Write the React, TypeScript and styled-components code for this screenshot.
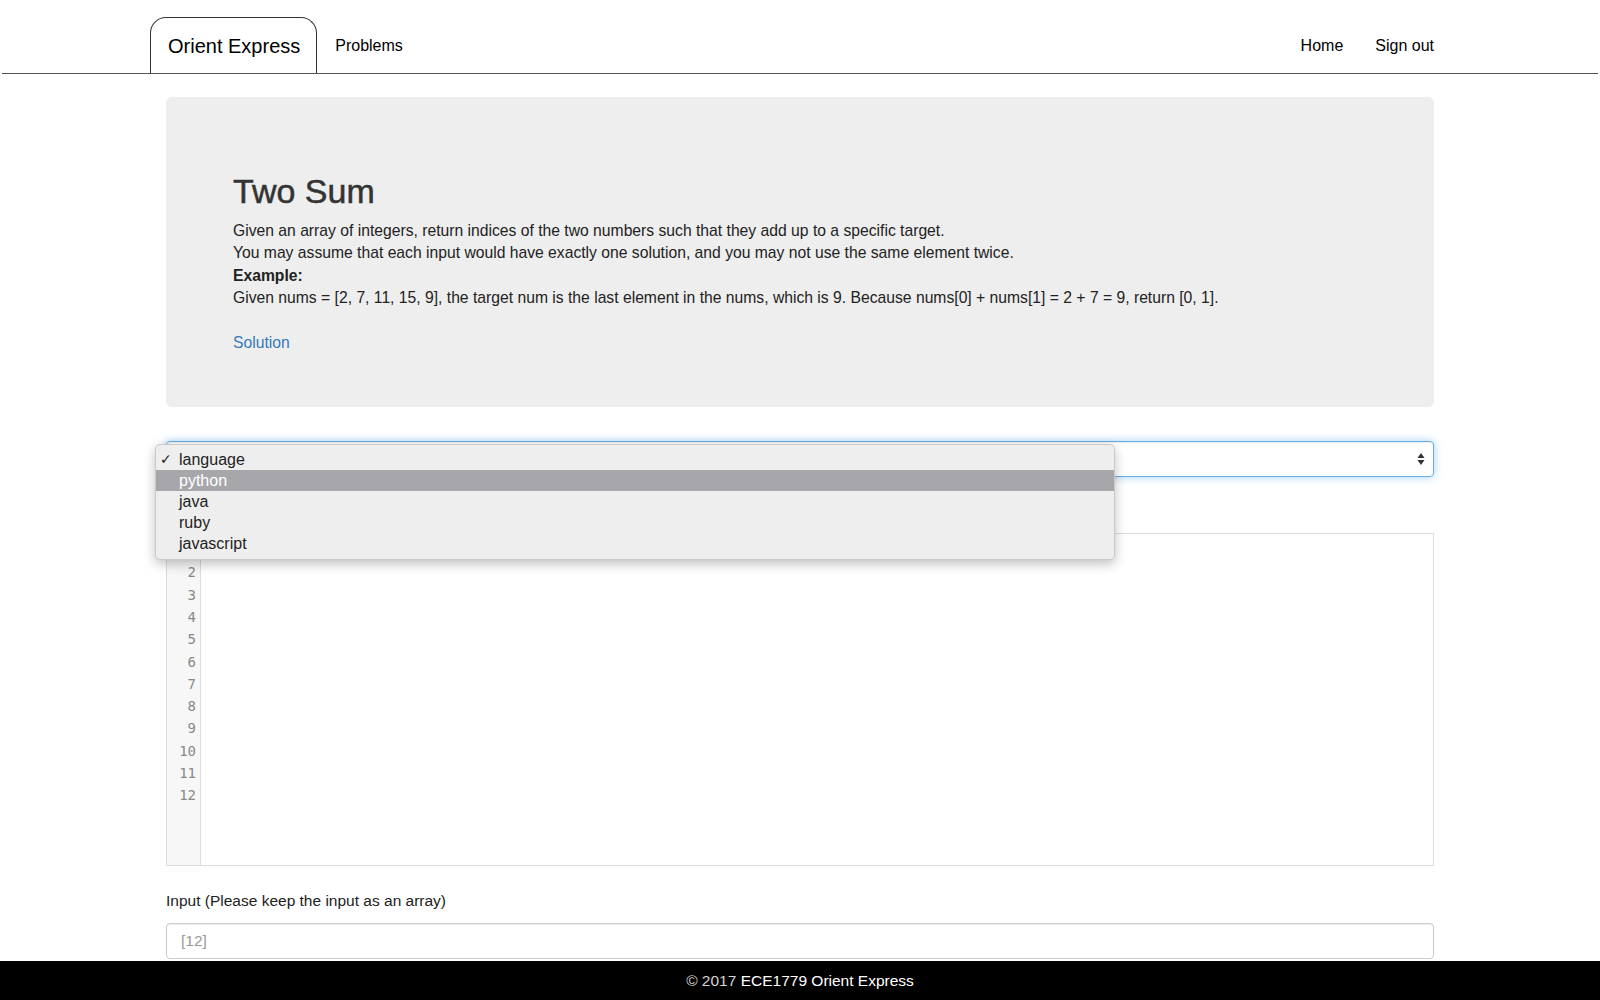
import React from "react";
import styled, { createGlobalStyle } from "styled-components";

const Global = createGlobalStyle`
  html, body { margin: 0; padding: 0; background: #fff; }
  body { font-family: "Liberation Sans", Arial, Helvetica, sans-serif; color: #333; }
  * { box-sizing: border-box; }
`;

const Header = styled.header`
  margin: 0 2px;
  height: 74px;
  border-bottom: 1px solid #555;
  display: flex;
  align-items: flex-end;
  padding: 0 164px 0 148px;
`;

const BrandTab = styled.a`
  height: 56px;
  display: flex;
  align-items: center;
  padding: 2px 16px 0 17px;
  border: 1px solid #333;
  border-bottom: none;
  border-radius: 16px 16px 0 0;
  font-size: 20px;
  color: #000;
  text-decoration: none;
`;

const NavLink = styled.a<{ $gap?: number }>`
  height: 56px;
  display: flex;
  align-items: center;
  padding-top: 2px;
  margin-left: ${(p) => p.$gap ?? 0}px;
  font-size: 16px;
  color: #000;
  text-decoration: none;
`;

const Spacer = styled.div`
  flex: 1;
`;

const Main = styled.main`
  width: 1268px;
  margin: 23px auto 0;
  padding-bottom: 60px;
`;

const Jumbotron = styled.section`
  background: #eee;
  border-radius: 6px;
  padding: 73px 66px 53px 67px;
`;

const Title = styled.h1`
  margin: 0 0 8px;
  font-size: 34px;
  line-height: 42px;
  font-weight: 500;
  color: #333;
  -webkit-text-stroke: 0.5px #333;
`;

const Para = styled.p<{ $bold?: boolean }>`
  margin: 0;
  font-size: 15.7px;
  line-height: 22.4px;
  color: #222;
  font-weight: ${(p) => (p.$bold ? 700 : 400)};
`;

const SolutionLink = styled.a`
  display: block;
  margin-top: 22px;
  font-size: 15.7px;
  line-height: 22.4px;
  color: #337ab7;
  text-decoration: none;
`;

const SelectWrap = styled.div`
  position: relative;
  margin-top: 34px;
`;

const SelectBox = styled.div`
  height: 36px;
  border: 1px solid #66afe9;
  border-radius: 4px;
  box-shadow: inset 0 1px 1px rgba(0, 0, 0, 0.075), 0 0 8px rgba(102, 175, 233, 0.6);
  display: flex;
  align-items: center;
  justify-content: space-between;
  padding: 0 8px 0 12px;
  font-size: 15.5px;
  color: #555;
  background: #fff;
`;

const Menu = styled.ul`
  position: absolute;
  left: -11px;
  top: 3px;
  width: 960px;
  margin: 0;
  padding: 4px 0 5px;
  list-style: none;
  background: #eeeeee;
  border: 1px solid #c9c9c9;
  border-radius: 5px;
  box-shadow: 0 4px 12px rgba(0, 0, 0, 0.25);
  z-index: 5;
`;

const MenuItem = styled.li<{ $active?: boolean }>`
  position: relative;
  height: 21px;
  line-height: 21px;
  padding-left: 23px;
  font-size: 16px;
  color: ${(p) => (p.$active ? "#fff" : "#222")};
  background: ${(p) => (p.$active ? "#a7a7ab" : "transparent")};
`;

const Check = styled.span`
  position: absolute;
  left: 4px;
  top: 0;
  font-size: 14px;
  font-family: "DejaVu Sans", sans-serif;
`;

const Editor = styled.div`
  margin-top: 56px;
  height: 333px;
  border: 1px solid #ddd;
  display: flex;
`;

const Gutter = styled.div`
  width: 34px;
  background: #f7f7f7;
  border-right: 1px solid #ddd;
  padding: 5px 4px 0 0;
  text-align: right;
  font-family: "DejaVu Sans Mono", "Liberation Mono", monospace;
  font-size: 14px;
  line-height: 22.3px;
  color: #888;
`;

const CodeArea = styled.div`
  flex: 1;
  background: #fff;
`;

const Label = styled.div`
  margin-top: 25px;
  font-size: 15.5px;
  line-height: 20px;
  color: #222;
`;

const InputBox = styled.input`
  display: block;
  width: 100%;
  margin-top: 12px;
  height: 36px;
  border: 1px solid #ccc;
  border-radius: 4px;
  padding: 0 14px;
  font-family: inherit;
  font-size: 15.5px;
  box-shadow: inset 0 1px 1px rgba(0, 0, 0, 0.075);
  &::placeholder { color: #999; }
`;

const Footer = styled.footer`
  position: fixed;
  left: 0;
  right: 0;
  bottom: 0;
  height: 39px;
  background: #000;
  color: #fff;
  text-align: center;
  line-height: 39px;
  font-size: 15.5px;
`;

const Muted = styled.span`
  color: #d4d4d4;
`;

const Arrows = () => (
  <svg width="8" height="14" viewBox="0 0 8 14">
    <path d="M4 1 L7.5 6 H0.5 Z" fill="#333" />
    <path d="M4 13 L7.5 8 H0.5 Z" fill="#333" />
  </svg>
);

const languages = ["language", "python", "java", "ruby", "javascript"];

export default function App() {
  return (
    <>
      <Global />
      <Header>
        <BrandTab href="#">Orient Express</BrandTab>
        <NavLink href="#" $gap={18}>Problems</NavLink>
        <Spacer />
        <NavLink href="#">Home</NavLink>
        <NavLink href="#" $gap={32}>Sign out</NavLink>
      </Header>
      <Main>
        <Jumbotron>
          <Title>Two Sum</Title>
          <Para>Given an array of integers, return indices of the two numbers such that they add up to a specific target.</Para>
          <Para>You may assume that each input would have exactly one solution, and you may not use the same element twice.</Para>
          <Para $bold>Example:</Para>
          <Para>Given nums = [2, 7, 11, 15, 9], the target num is the last element in the nums, which is 9. Because nums[0] + nums[1] = 2 + 7 = 9, return [0, 1].</Para>
          <SolutionLink href="#">Solution</SolutionLink>
        </Jumbotron>
        <SelectWrap>
          <SelectBox>
            <span>language</span>
            <Arrows />
          </SelectBox>
          <Menu>
            {languages.map((l, i) => (
              <MenuItem key={l} $active={i === 1}>
                {i === 0 && <Check>✓</Check>}
                {l}
              </MenuItem>
            ))}
          </Menu>
        </SelectWrap>
        <Editor>
          <Gutter>
            {Array.from({ length: 12 }, (_, i) => (
              <div key={i}>{i + 1}</div>
            ))}
          </Gutter>
          <CodeArea />
        </Editor>
        <Label>Input (Please keep the input as an array)</Label>
        <InputBox placeholder="[12]" />
      </Main>
      <Footer>
        <Muted>© 2017</Muted> ECE1779 Orient Express
      </Footer>
    </>
  );
}
